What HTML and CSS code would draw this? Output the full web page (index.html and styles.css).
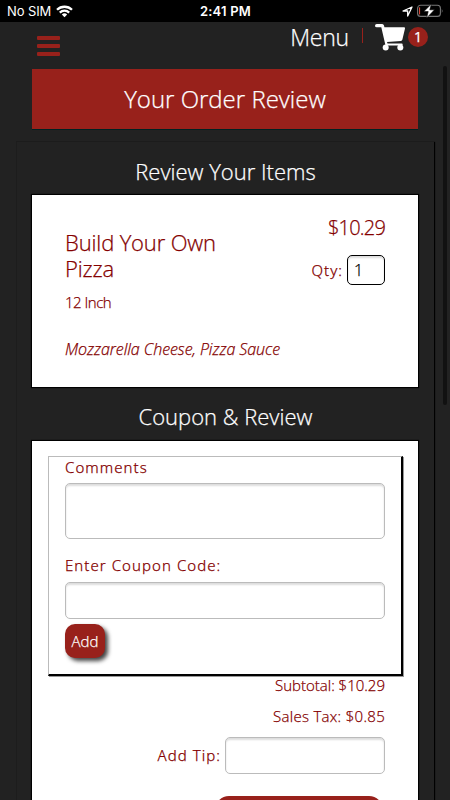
FILE: index.html
```
<!DOCTYPE html>
<html lang="en">
<head>
    <meta charset="UTF-8">
    <meta name="viewport" content="width=device-width, initial-scale=1.0">
    <title>Your Order Review</title>
    <link rel="stylesheet" href="styles.css">
</head>
<body>
    <div class="status-bar">
        <div class="status-left">
            <span>No SIM</span>
            <svg width="17" height="13" viewBox="0 0 17 13" fill="none" stroke="#fff" stroke-width="2.3">
                <path d="M1 4.8a10.7 10.7 0 0 1 15 0M3.8 7.6a6.8 6.8 0 0 1 9.4 0"/>
                <path d="M8.5 12.3L5.8 9.5a4 4 0 0 1 5.4 0z" fill="#fff" stroke="none"/>
            </svg>
        </div>
        <span class="status-time">2:41 PM</span>
        <div class="status-right">
            <svg width="11" height="11" viewBox="0 0 11 11" fill="none" stroke="#fff" stroke-width="1.3" stroke-linejoin="round">
                <path d="M10 1L1 5h4.7v5z"/>
            </svg>
            <svg width="27" height="14" viewBox="0 0 27 14">
                <rect x=".6" y="1.2" width="22.8" height="11.2" rx="3" fill="none" stroke="#777" stroke-width="1.1"/>
                <path d="M2.6 3.4v7" stroke="#f0503c" stroke-width="1"/>
                <path d="M24.8 4.8q1.6 2.1 0 4.2z" fill="#777"/>
                <path d="M14.4 0L6.8 7.6h4.4L9.6 14l7.9-8.2h-4.7z" fill="#fff" stroke="#000" stroke-width=".6"/>
            </svg>
        </div>
    </div>

    <header class="site-header">
        <button class="menu-toggle" aria-label="Open menu"><span></span><span></span><span></span></button>
        <nav class="top-nav">
            <a class="menu-link">Menu</a>
            <span class="divider"></span>
            <svg class="cart" width="31" height="28" viewBox="0 0 31 28" fill="#fff">
                <path d="M1.8 0h5.4q1.4 0 1.8 1.6L9.4 3.2H29q1.2 0 1 1.2l-2.6 11.2q-.3 1.2-1.5 1.3L12 18l.5 1.5h14.2q1 0 1 1t-1 1H10.5L6.3 3.3H1.8Q0 3.3 0 1.65T1.8 0z"/>
                <circle cx="10.7" cy="23.6" r="3"/>
                <circle cx="25.3" cy="23.6" r="3"/>
            </svg>
            <span class="cart-count">1</span>
        </nav>
    </header>

    <h1 class="page-title">Your Order Review</h1>

    <main class="order">
        <h2>Review Your Items</h2>
        <section class="card item">
            <div class="item-info">
                <h3>Build Your Own Pizza</h3>
                <p class="size">12 Inch</p>
            </div>
            <div class="item-price">
                <p class="price">$10.29</p>
                <div class="qty">
                    <label for="qty">Qty:</label>
                    <input type="text" id="qty" value="1">
                </div>
            </div>
            <p class="toppings">Mozzarella Cheese, Pizza Sauce</p>
        </section>

        <h2>Coupon &amp; Review</h2>
        <section class="card checkout">
            <div class="coupon-box">
                <label for="comments">Comments</label>
                <textarea id="comments"></textarea>
                <label for="code">Enter Coupon Code:</label>
                <input type="text" id="code">
                <button class="add-btn">Add</button>
            </div>
            <p class="subtotal">Subtotal: $10.29</p>
            <p class="tax">Sales Tax: $0.85</p>
            <div class="tip">
                <label for="tip">Add Tip:</label>
                <input type="text" id="tip">
            </div>
            <button class="submit-btn" aria-label="Place order"></button>
        </section>
    </main>
    <div class="scrollbar"></div>
</body>
</html>
```
FILE: styles.css
```
* {
    box-sizing: border-box;
}
html {
    background-color: #222;
}
body {
    margin: 0;
    height: 800px;
    overflow: hidden;
    position: relative;
    background-color: #222;
    color: #840000;
    font-family: "Open Sans", "Noto Sans", sans-serif;
    font-weight: 300;
    font-size: 15px;
    -webkit-text-stroke: 0.25px;
}
h1, h2, h3, p {
    margin: 0;
    font-weight: 300;
}
button {
    border: none;
    padding: 0;
    font-family: inherit;
}
svg {
    display: block;
}
.status-bar {
    display: grid;
    grid-template-columns: 1fr auto 1fr;
    align-items: center;
    height: 22px;
    padding: 0 6px 0 7px;
    background-color: #000;
    color: #fff;
    font-family: Inter, sans-serif;
    font-size: 13px;
    font-weight: 400;
    -webkit-text-stroke: 0;
}
.status-left, .status-right {
    display: flex;
    align-items: center;
    gap: 5px;
}
.status-left span {
    letter-spacing: -0.1px;
}
.status-right {
    justify-content: flex-end;
    gap: 4px;
}
.status-time {
    font-weight: 600;
    letter-spacing: 0.2px;
}
.site-header {
    display: flex;
    justify-content: space-between;
    height: 47px;
    padding: 0 22px 0 37px;
}
.menu-toggle {
    display: flex;
    flex-direction: column;
    gap: 4px;
    width: 23px;
    padding-top: 14px;
    background: none;
}
.menu-toggle span {
    height: 4px;
    border-radius: 1px;
    background-color: #98211b;
}
.top-nav {
    display: flex;
    height: 30px;
    align-items: center;
    color: #fff;
}
.menu-link {
    font-size: 23px;
    letter-spacing: -0.2px;
    padding-bottom: 1px;
}
.divider {
    width: 1px;
    height: 15px;
    margin: 0 12px 4px 13px;
    background-color: #98211b;
}
.cart {
    margin-top: 2px;
}
.cart-count {
    width: 20px;
    height: 20px;
    margin-left: 2px;
    border-radius: 50%;
    background-color: #98211b;
    font-size: 14px;
    font-weight: 400;
    line-height: 20px;
    text-align: center;
}
.page-title {
    height: 61px;
    margin: 0 32px;
    border-bottom: 1px solid #022;
    background-color: #98211b;
    color: #fff;
    font-size: 24px;
    line-height: 60px;
    text-align: center;
}
.order {
    margin: 11px 16px 0;
    padding: 0 16px;
    border-top: 1px solid #1c1c1c;
    border-left: 1px solid #1d1d1d;
    box-shadow: 1px 1px 1px #000;
}
.order h2 {
    height: 54px;
    color: #fff;
    font-size: 22px;
    line-height: 59px;
    text-align: center;
}
.order h2:first-child {
    height: 53px;
}
.card {
    margin: 0 0 0 -1px;
    background-color: #fff;
    box-shadow: 0 0 1px 1px #000;
}
.item {
    display: grid;
    grid-template-columns: 1fr auto;
    grid-template-rows: 115px auto;
    height: 192px;
    padding: 16px 33px 0;
}
.item h3 {
    width: 180px;
    margin-top: 18px;
    font-size: 22px;
    letter-spacing: -0.15px;
    line-height: 26px;
}
.size {
    margin-top: 10px;
    letter-spacing: -0.5px;
    line-height: 22px;
}
.price {
    font-size: 20px;
    letter-spacing: -0.8px;
    line-height: 34px;
    text-align: right;
}
.qty {
    display: flex;
    justify-content: flex-end;
    align-items: center;
    gap: 4px;
    margin-top: 10px;
}
label {
    font-family: "Noto Sans", sans-serif;
    font-weight: 340;
    font-size: 15px;
    letter-spacing: 1.05px;
}
input, textarea {
    display: block;
    border: 1px solid #bbb;
    border-radius: 5px;
    background-color: #fff;
    box-shadow: inset 0 2px 2px #ddd;
    font-family: inherit;
    font-weight: 300;
    font-size: 16px;
    resize: none;
}
.qty input {
    width: 38px;
    height: 30px;
    padding: 0 6px;
    border-color: #000;
}
.toppings {
    grid-column: 1 / 3;
    margin-top: 12px;
    font-size: 16px;
    font-style: italic;
    letter-spacing: -0.05px;
    line-height: 22px;
}
.checkout {
    height: 380px;
    padding: 15px 15px 0 16px;
}
.coupon-box {
    height: 220px;
    padding: 0 15px 0 16px;
    border: 1px solid #bbb;
    border-right: 2px solid #000;
    border-bottom: 2px solid #000;
    box-shadow: 1px 1px 0 #999;
}
.coupon-box label {
    display: block;
    height: 22px;
    line-height: 21px;
}
.coupon-box input, .coupon-box textarea {
    width: 320px;
}
.coupon-box textarea {
    height: 56px;
    margin: 4px 0 16px;
}
.coupon-box input {
    height: 37px;
    margin-top: 5px;
}
.add-btn {
    display: block;
    width: 40px;
    height: 34px;
    margin-top: 5px;
    border-radius: 10px;
    background-color: #98211b;
    box-shadow: 3px 3px 4px #444;
    color: #fff;
    font-size: 15px;
    font-weight: 300;
}
.subtotal, .tax {
    padding-right: 18px;
    line-height: 22px;
    text-align: right;
}
.subtotal {
    margin-top: -2px;
}
.tax {
    margin-top: 9px;
    letter-spacing: 0.3px;
}
.tip {
    display: flex;
    justify-content: flex-end;
    align-items: center;
    gap: 4px;
    margin-top: 10px;
    padding-right: 18px;
}
.tip input {
    width: 160px;
    height: 37px;
}
.tip label {
    padding-bottom: 1px;
}
.submit-btn {
    display: block;
    width: 168px;
    height: 40px;
    margin: 22px 20px 0 auto;
    border-radius: 14px;
    background-color: #98211b;
}
.scrollbar {
    position: absolute;
    top: 66px;
    right: 3px;
    width: 4px;
    height: 339px;
    border-radius: 2px;
    background-color: #111;
}
```
